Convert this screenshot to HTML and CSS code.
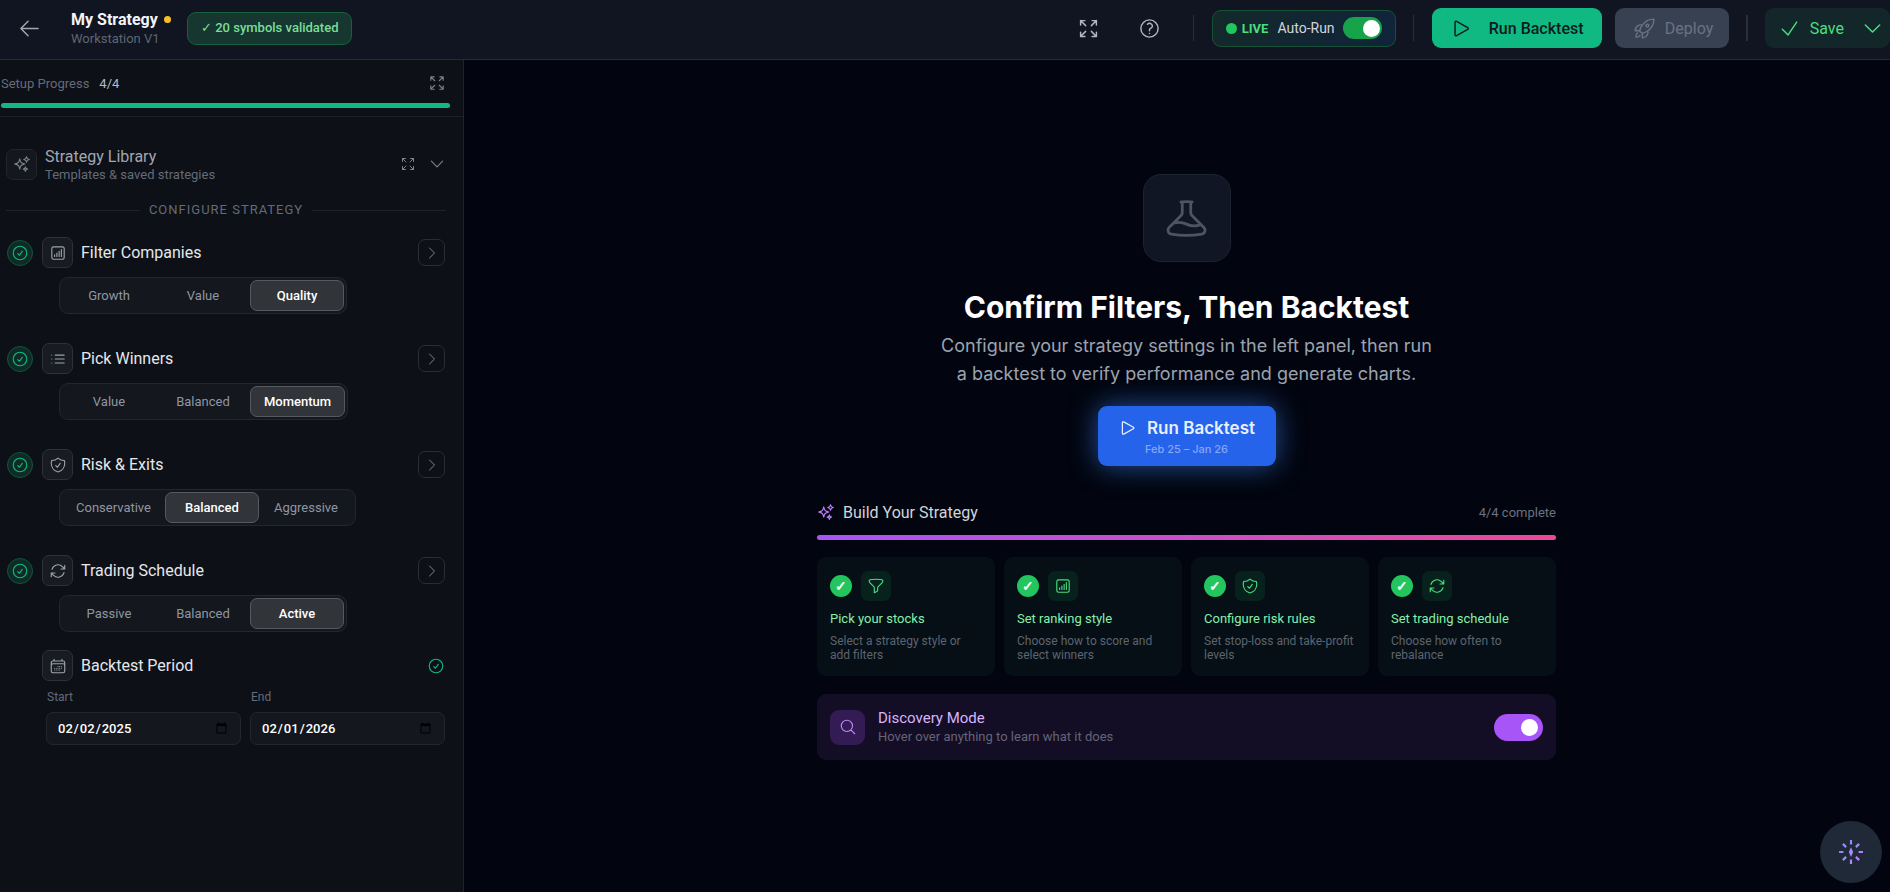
FILE: index.html
```html
<!DOCTYPE html>
<html lang="en">
<head>
  <meta charset="UTF-8">
  <meta name="viewport" content="width=device-width, initial-scale=1.0">
  <title>My Strategy - Workstation V1</title>
  <link rel="stylesheet" href="styles.css">
</head>
<body>
  <!-- Icon set -->
  <svg class="icon-defs" aria-hidden="true">
    <symbol id="i-arrow-left" viewBox="0 0 24 24"><path d="M10.5 19.5 3 12m0 0 7.5-7.5M3 12h18"/></symbol>
    <symbol id="i-expand" viewBox="0 0 24 24"><path d="M3.75 3.75v4.5m0-4.5h4.5m-4.5 0L9 9M3.75 20.25v-4.5m0 4.5h4.5m-4.5 0L9 15M20.25 3.75h-4.5m4.5 0v4.5m0-4.5L15 9m5.25 11.25h-4.5m4.5 0v-4.5m0 4.5L15 15"/></symbol>
    <symbol id="i-help" viewBox="0 0 24 24"><path d="M9.879 7.519c1.171-1.025 3.071-1.025 4.242 0 1.172 1.025 1.172 2.687 0 3.712-.203.179-.43.326-.67.442-.745.361-1.45.999-1.45 1.827v.75M21 12a9 9 0 1 1-18 0 9 9 0 0 1 18 0Zm-9 5.25h.008v.008H12v-.008Z"/></symbol>
    <symbol id="i-play" viewBox="0 0 24 24"><path d="M5.25 5.653c0-.856.917-1.398 1.667-.986l11.54 6.347a1.125 1.125 0 0 1 0 1.972l-11.54 6.347a1.125 1.125 0 0 1-1.667-.986V5.653Z"/></symbol>
    <symbol id="i-rocket" viewBox="0 0 24 24"><path d="M15.59 14.37a6 6 0 0 1-5.84 7.38v-4.8m5.84-2.58a14.98 14.98 0 0 0 6.16-12.12A14.98 14.98 0 0 0 9.631 8.41m5.96 5.96a14.926 14.926 0 0 1-5.841 2.58m-.119-8.54a6 6 0 0 0-7.381 5.84h4.8m2.581-5.84a14.927 14.927 0 0 0-2.58 5.84m2.699 2.7c-.103.021-.207.041-.311.06a15.09 15.09 0 0 1-2.448-2.448 14.9 14.9 0 0 1 .06-.312m-2.24 2.39a4.493 4.493 0 0 0-1.757 4.306 4.493 4.493 0 0 0 4.306-1.758M16.5 9a1.5 1.5 0 1 1-3 0 1.5 1.5 0 0 1 3 0Z"/></symbol>
    <symbol id="i-check" viewBox="0 0 24 24"><path d="m4.5 12.75 6 6 9-13.5"/></symbol>
    <symbol id="i-chevron-down" viewBox="0 0 24 24"><path d="m19.5 8.25-7.5 7.5-7.5-7.5"/></symbol>
    <symbol id="i-chevron-right" viewBox="0 0 24 24"><path d="m8.25 4.5 7.5 7.5-7.5 7.5"/></symbol>
    <symbol id="i-sparkles" viewBox="0 0 24 24"><path d="M9.813 15.904 9 18.75l-.813-2.846a4.5 4.5 0 0 0-3.09-3.09L2.25 12l2.846-.813a4.5 4.5 0 0 0 3.09-3.09L9 5.25l.813 2.846a4.5 4.5 0 0 0 3.09 3.09L15.75 12l-2.846.813a4.5 4.5 0 0 0-3.09 3.09ZM18.259 8.715 18 9.75l-.259-1.035a3.375 3.375 0 0 0-2.455-2.456L14.25 6l1.036-.259a3.375 3.375 0 0 0 2.455-2.456L18 2.25l.259 1.035a3.375 3.375 0 0 0 2.456 2.456L21.75 6l-1.035.259a3.375 3.375 0 0 0-2.456 2.456ZM16.894 20.567 16.5 21.75l-.394-1.183a2.25 2.25 0 0 0-1.423-1.423L13.5 18.75l1.183-.394a2.25 2.25 0 0 0 1.423-1.423l.394-1.183.394 1.183a2.25 2.25 0 0 0 1.423 1.423l1.183.394-1.183.394a2.25 2.25 0 0 0-1.423 1.423Z"/></symbol>
    <symbol id="i-check-circle" viewBox="0 0 24 24"><path d="M9 12.75 11.25 15 15 9.75M21 12a9 9 0 1 1-18 0 9 9 0 0 1 18 0Z"/></symbol>
    <symbol id="i-chart" viewBox="0 0 24 24"><path d="M7.5 14.25v2.25m3-4.5v4.5m3-6.75v6.75m3-9v9M6 20.25h12A2.25 2.25 0 0 0 20.25 18V6A2.25 2.25 0 0 0 18 3.75H6A2.25 2.25 0 0 0 3.75 6v12A2.25 2.25 0 0 0 6 20.25Z"/></symbol>
    <symbol id="i-list" viewBox="0 0 24 24"><path d="M8.25 6.75h12M8.25 12h12m-12 5.25h12M3.75 6.75h.007v.008H3.75V6.75Zm0 5.25h.007v.008H3.75V12Zm0 5.25h.007v.008H3.75v-.008Z"/></symbol>
    <symbol id="i-shield" viewBox="0 0 24 24"><path d="M9 12.75 11.25 15 15 9.75m-3-7.036A11.959 11.959 0 0 1 3.598 6 11.99 11.99 0 0 0 3 9.749c0 5.592 3.824 10.29 9 11.623 5.176-1.332 9-6.03 9-11.622 0-1.31-.21-2.571-.598-3.751h-.152c-3.196 0-6.1-1.248-8.25-3.285Z"/></symbol>
    <symbol id="i-refresh" viewBox="0 0 24 24"><path d="M16.023 9.348h4.992v-.001M2.985 19.644v-4.992m0 0h4.992m-4.993 0 3.181 3.183a8.25 8.25 0 0 0 13.803-3.7M4.031 9.865a8.25 8.25 0 0 1 13.803-3.7l3.181 3.182m0-4.991v4.99"/></symbol>
    <symbol id="i-calendar" viewBox="0 0 24 24"><path d="M6.75 3v2.25M17.25 3v2.25M3 18.75V7.5a2.25 2.25 0 0 1 2.25-2.25h13.5A2.25 2.25 0 0 1 21 7.5v11.25m-18 0A2.25 2.25 0 0 0 5.25 21h13.5A2.25 2.25 0 0 0 21 18.75m-18 0v-7.5A2.25 2.25 0 0 1 5.25 9h13.5A2.25 2.25 0 0 1 21 11.25v7.5m-9-6h.008v.008H12v-.008ZM12 15h.008v.008H12V15Zm0 2.25h.008v.008H12v-.008ZM9.75 15h.008v.008H9.75V15Zm0 2.25h.008v.008H9.75v-.008ZM7.5 15h.008v.008H7.5V15Zm0 2.25h.008v.008H7.5v-.008Zm6.75-4.5h.008v.008h-.008v-.008Zm0 2.25h.008v.008h-.008V15Zm0 2.25h.008v.008h-.008v-.008Zm2.25-4.5h.008v.008H16.5v-.008Zm0 2.25h.008v.008H16.5V15Z"/></symbol>
    <symbol id="i-funnel" viewBox="0 0 24 24"><path d="M12 3c2.755 0 5.455.232 8.083.678.533.09.917.556.917 1.096v1.044a2.25 2.25 0 0 1-.659 1.591l-5.432 5.432a2.25 2.25 0 0 0-.659 1.591v2.927a2.25 2.25 0 0 1-1.244 2.013L9.75 21v-6.568a2.25 2.25 0 0 0-.659-1.591L3.659 7.409A2.25 2.25 0 0 1 3 5.818V4.774c0-.54.384-1.006.917-1.096A48.32 48.32 0 0 1 12 3Z"/></symbol>
    <symbol id="i-search" viewBox="0 0 24 24"><path d="m21 21-5.197-5.197m0 0A7.5 7.5 0 1 0 5.196 5.196a7.5 7.5 0 0 0 10.607 10.607Z"/></symbol>
    <symbol id="i-beaker" viewBox="0 0 24 24"><path d="M9.75 3.104v5.714a2.25 2.25 0 0 1-.659 1.591L5 14.5M9.75 3.104c-.251.023-.501.05-.75.082m.75-.082a24.301 24.301 0 0 1 4.5 0m0 0v5.714c0 .597.237 1.17.659 1.591L19.8 15.3M14.25 3.104c.251.023.501.05.75.082M19.8 15.3l-1.57.393A9.065 9.065 0 0 1 12 15a9.065 9.065 0 0 0-6.23-.693L5 14.5m14.8.8 1.402 1.402c1.232 1.232.65 3.318-1.067 3.611A48.309 48.309 0 0 1 12 21c-2.773 0-5.491-.235-8.135-.687-1.718-.293-2.3-2.379-1.067-3.61L5 14.5"/></symbol>
  </svg>

  <!-- Top Bar -->
  <header class="topbar">
    <button class="icon-button back" aria-label="Back"><svg class="icon icon-lg"><use href="#i-arrow-left"/></svg></button>
    <div class="title-block">
      <h1 class="strategy-name">My Strategy <span class="unsaved-dot"></span></h1>
      <div class="strategy-sub">Workstation V1</div>
    </div>
    <div class="validated">✓ 20 symbols validated</div>

    <div class="actions">
      <button class="icon-button" aria-label="Full screen"><svg class="icon icon-lg"><use href="#i-expand"/></svg></button>
      <button class="icon-button" aria-label="Help"><svg class="icon icon-lg"><use href="#i-help"/></svg></button>
      <span class="divider"></span>
      <div class="live">
        <span class="live-dot"></span>
        <span class="live-label">LIVE</span>
        <label class="live-text" for="auto-run">Auto-Run</label>
        <input class="toggle toggle-green" type="checkbox" id="auto-run" checked>
      </div>
      <span class="divider"></span>
      <button class="button run"><svg class="icon icon-lg"><use href="#i-play"/></svg>Run Backtest</button>
      <button class="button deploy" disabled><svg class="icon icon-lg"><use href="#i-rocket"/></svg>Deploy</button>
      <span class="divider divider-thick"></span>
      <div class="save-group">
        <button class="button save"><svg class="icon icon-lg"><use href="#i-check"/></svg>Save</button>
        <button class="button save-menu" aria-label="Save options"><svg class="icon icon-lg"><use href="#i-chevron-down"/></svg></button>
      </div>
    </div>
  </header>

  <div class="workspace">
    <!-- Left Panel -->
    <aside class="sidebar">
      <div class="progress-head">
        <div class="progress-row">
          <span class="muted">Setup Progress</span>
          <span class="progress-count">4/4</span>
          <button class="icon-button push" aria-label="Expand panel"><svg class="icon"><use href="#i-expand"/></svg></button>
        </div>
        <div class="bar bar-green"></div>
      </div>

      <div class="panel">
        <div class="library">
          <span class="tile tile-dim"><svg class="icon"><use href="#i-sparkles"/></svg></span>
          <div class="library-text">
            <div class="library-title">Strategy Library</div>
            <div class="library-sub">Templates &amp; saved strategies</div>
          </div>
          <button class="icon-button push" aria-label="Expand library"><svg class="icon icon-sm"><use href="#i-expand"/></svg></button>
          <button class="icon-button" aria-label="Show library"><svg class="icon"><use href="#i-chevron-down"/></svg></button>
        </div>

        <div class="separator">CONFIGURE STRATEGY</div>

        <section class="step">
          <div class="step-head">
            <span class="status"><svg class="icon"><use href="#i-check-circle"/></svg></span>
            <span class="tile"><svg class="icon"><use href="#i-chart"/></svg></span>
            <h2 class="step-title">Filter Companies</h2>
            <button class="open" aria-label="Open Filter Companies"><svg class="icon icon-sm"><use href="#i-chevron-right"/></svg></button>
          </div>
          <div class="segments">
            <button class="segment">Growth</button>
            <button class="segment">Value</button>
            <button class="segment active">Quality</button>
          </div>
        </section>

        <section class="step">
          <div class="step-head">
            <span class="status"><svg class="icon"><use href="#i-check-circle"/></svg></span>
            <span class="tile"><svg class="icon"><use href="#i-list"/></svg></span>
            <h2 class="step-title">Pick Winners</h2>
            <button class="open" aria-label="Open Pick Winners"><svg class="icon icon-sm"><use href="#i-chevron-right"/></svg></button>
          </div>
          <div class="segments">
            <button class="segment">Value</button>
            <button class="segment">Balanced</button>
            <button class="segment active">Momentum</button>
          </div>
        </section>

        <section class="step">
          <div class="step-head">
            <span class="status"><svg class="icon"><use href="#i-check-circle"/></svg></span>
            <span class="tile"><svg class="icon"><use href="#i-shield"/></svg></span>
            <h2 class="step-title">Risk &amp; Exits</h2>
            <button class="open" aria-label="Open Risk and Exits"><svg class="icon icon-sm"><use href="#i-chevron-right"/></svg></button>
          </div>
          <div class="segments">
            <button class="segment">Conservative</button>
            <button class="segment active">Balanced</button>
            <button class="segment">Aggressive</button>
          </div>
        </section>

        <section class="step">
          <div class="step-head">
            <span class="status"><svg class="icon"><use href="#i-check-circle"/></svg></span>
            <span class="tile"><svg class="icon"><use href="#i-refresh"/></svg></span>
            <h2 class="step-title">Trading Schedule</h2>
            <button class="open" aria-label="Open Trading Schedule"><svg class="icon icon-sm"><use href="#i-chevron-right"/></svg></button>
          </div>
          <div class="segments">
            <button class="segment">Passive</button>
            <button class="segment">Balanced</button>
            <button class="segment active">Active</button>
          </div>
        </section>

        <section class="period">
          <div class="step-head">
            <span class="tile"><svg class="icon"><use href="#i-calendar"/></svg></span>
            <h2 class="step-title">Backtest Period</h2>
            <svg class="icon period-check"><use href="#i-check-circle"/></svg>
          </div>
          <div class="dates">
            <div class="date-field">
              <label for="start">Start</label>
              <input type="date" id="start" value="2025-02-02">
            </div>
            <div class="date-field">
              <label for="end">End</label>
              <input type="date" id="end" value="2026-02-01">
            </div>
          </div>
        </section>
      </div>
    </aside>

    <!-- Main Area -->
    <main class="main">
      <div class="hero-icon"><svg class="icon icon-xl"><use href="#i-beaker"/></svg></div>
      <h2 class="hero-title">Confirm Filters, Then Backtest</h2>
      <p class="hero-text">Configure your strategy settings in the left panel, then run a backtest to verify performance and generate charts.</p>
      <button class="hero-run">
        <span class="hero-run-label"><svg class="icon icon-md"><use href="#i-play"/></svg>Run Backtest</span>
        <span class="hero-run-dates">Feb 25 – Jan 26</span>
      </button>

      <div class="build">
        <div class="build-head">
          <svg class="icon build-icon"><use href="#i-sparkles"/></svg>
          <h3 class="build-title">Build Your Strategy</h3>
          <span class="build-count">4/4 complete</span>
        </div>
        <div class="bar bar-purple"></div>

        <div class="cards">
          <div class="card">
            <div class="card-icons"><span class="done">✓</span><span class="card-tile"><svg class="icon"><use href="#i-funnel"/></svg></span></div>
            <div class="card-title">Pick your stocks</div>
            <div class="card-text">Select a strategy style or add filters</div>
          </div>
          <div class="card">
            <div class="card-icons"><span class="done">✓</span><span class="card-tile"><svg class="icon"><use href="#i-chart"/></svg></span></div>
            <div class="card-title">Set ranking style</div>
            <div class="card-text">Choose how to score and select winners</div>
          </div>
          <div class="card">
            <div class="card-icons"><span class="done">✓</span><span class="card-tile"><svg class="icon"><use href="#i-shield"/></svg></span></div>
            <div class="card-title">Configure risk rules</div>
            <div class="card-text">Set stop-loss and take-profit levels</div>
          </div>
          <div class="card">
            <div class="card-icons"><span class="done">✓</span><span class="card-tile"><svg class="icon"><use href="#i-refresh"/></svg></span></div>
            <div class="card-title">Set trading schedule</div>
            <div class="card-text">Choose how often to rebalance</div>
          </div>
        </div>

        <div class="discovery">
          <span class="discovery-icon"><svg class="icon"><use href="#i-search"/></svg></span>
          <div>
            <label class="discovery-title" for="discovery">Discovery Mode</label>
            <div class="discovery-text">Hover over anything to learn what it does</div>
          </div>
          <input class="toggle toggle-purple" type="checkbox" id="discovery" checked>
        </div>
      </div>
    </main>
  </div>

  <!-- Floating Assistant Button -->
  <button class="fab" aria-label="Assistant">
    <svg class="fab-icon" viewBox="0 0 24 24">
      <defs>
        <linearGradient id="fab-gradient" gradientUnits="userSpaceOnUse" x1="0" y1="0" x2="24" y2="24">
          <stop offset="0" stop-color="#818cf8"/>
          <stop offset="1" stop-color="#c084fc"/>
        </linearGradient>
      </defs>
      <path d="M12 1v4M12 19v4M1 12h4M19 12h4M4.500 4.500l3 3M16.500 16.500l3 3M4.500 19.500l3-3M16.500 7.500l3-3" fill="none" stroke="url(#fab-gradient)" stroke-width="2"/>
      <path d="M12 7.500 14 12l-2 4.500L10 12Z" fill="#a78bfa"/>
    </svg>
  </button>
</body>
</html>
```

FILE: styles.css
```css
/* General Styling */
* {
  box-sizing: border-box;
}

body {
  margin: 0;
  min-height: 100vh;
  display: flex;
  flex-direction: column;
  font-family: Roboto, "Liberation Sans", sans-serif;
  font-size: 13px;
  background: #02050f;
  color: #e5e7eb;
}

h1, h2, h3, p {
  margin: 0;
  font-weight: normal;
}

button {
  font-family: inherit;
  cursor: pointer;
}

/* Icons */
.icon-defs {
  position: absolute;
  width: 0;
  height: 0;
}

.icon {
  width: 18px;
  height: 18px;
  flex-shrink: 0;
  fill: none;
  stroke: currentColor;
  stroke-width: 1.5;
  stroke-linecap: round;
  stroke-linejoin: round;
}

.icon-sm { width: 16px; height: 16px; }
.icon-md { width: 20px; height: 20px; }
.icon-lg { width: 23px; height: 23px; }
.icon-xl { width: 45px; height: 45px; }

.icon-button {
  display: flex;
  padding: 0;
  border: none;
  background: none;
  color: #7c818c;
}

.push {
  margin-left: auto;
}

/* Top Bar */
.topbar {
  display: flex;
  align-items: center;
  height: 60px;
  padding-left: 18px;
  padding-bottom: 3px;
  background: #101521;
  border-bottom: 1px solid #252a37;
}

.back {
  margin-right: 30px;
  color: #a3a6ad;
}

.title-block {
  width: 116px;
  padding-top: 1px;
}

.strategy-name {
  display: flex;
  align-items: center;
  gap: 6px;
  font-size: 16px;
  line-height: 20px;
  font-weight: bold;
  color: #f3f4f6;
  white-space: nowrap;
}

.unsaved-dot {
  width: 7px;
  height: 7px;
  border-radius: 50%;
  background: #fbbf24;
}

.strategy-sub {
  line-height: 18px;
  color: #5f6571;
}

.validated {
  height: 33px;
  padding: 0 13px;
  border: 1px solid #176039;
  border-radius: 9px;
  background: #15372f;
  color: #7bdd9b;
  font-weight: 500;
  line-height: 30px;
  white-space: nowrap;
}

.actions {
  display: flex;
  align-items: center;
  margin-left: auto;
}

.actions .icon-button {
  margin-right: 38px;
  color: #b4b7bf;
}

.actions .icon-button + .divider {
  margin-left: -6px;
}

.divider {
  width: 1px;
  height: 26px;
  margin-right: 18px;
  background: #292e3a;
}

.divider-thick {
  width: 2px;
  margin: 0 17px;
}

.live {
  display: flex;
  align-items: center;
  height: 37px;
  width: 184px;
  margin-right: 17px;
  padding: 0 13px;
  border: 1px solid #175236;
  border-radius: 9px;
  background: linear-gradient(90deg, #13292a, #10243a);
}

.live-dot {
  width: 11px;
  height: 11px;
  margin-right: 5px;
  border-radius: 50%;
  background: #22c55e;
}

.live-label {
  margin-right: 9px;
  font-size: 13px;
  font-weight: bold;
  color: #4ade80;
}

.live-text {
  font-size: 14px;
  color: #d1d5db;
}

/* Toggle Switches */
.toggle {
  appearance: none;
  display: flex;
  justify-content: flex-end;
  align-items: center;
  flex-shrink: 0;
  margin: 0 0 0 auto;
  border-radius: 14px;
  cursor: pointer;
}

.toggle::before {
  content: "";
  width: 17px;
  height: 17px;
  border-radius: 50%;
  background: #fff;
}

.toggle-green {
  width: 39px;
  height: 22px;
  padding-right: 2px;
  background: #16a34a;
}

.toggle-purple {
  width: 49px;
  height: 27px;
  padding-right: 5px;
  background: #a855f7;
}

/* Top Bar Buttons */
.button {
  display: flex;
  align-items: center;
  height: 40px;
  padding: 0 18px;
  border: none;
  border-radius: 9px;
  font-size: 16px;
  white-space: nowrap;
}

.run {
  gap: 16px;
  width: 170px;
  margin-right: 13px;
  background: #10b981;
  color: #0b1a20;
  font-weight: 500;
}

.deploy {
  gap: 9px;
  width: 114px;
  background: #374151;
  color: #6b7280;
  cursor: default;
}

.save-group {
  display: flex;
  border-radius: 9px;
  background: #13262a;
}

.save,
.save-menu {
  background: none;
  color: #4ade80;
}

.save {
  gap: 9px;
  padding: 0 9px 0 13px;
}

.save-menu {
  padding: 0 6px 0 8px;
}

/* Workspace */
.workspace {
  display: flex;
  flex: 1;
}

.sidebar {
  width: 464px;
  flex-shrink: 0;
  background: #0d1016;
  border-right: 1px solid #20232a;
}

.muted {
  color: #646b78;
}

.progress-head {
  height: 57px;
  padding: 14px 13px 0 1px;
  border-bottom: 1px solid #1d2027;
}

.progress-row {
  display: flex;
  align-items: center;
  gap: 10px;
  height: 18px;
  padding-right: 4px;
  margin-bottom: 11px;
}

.progress-count {
  color: #b6bbc4;
}

.bar {
  height: 5px;
  border-radius: 3px;
}

.bar-green {
  background: #10b981;
}

.bar-purple {
  background: linear-gradient(90deg, #a855f7, #ec4899);
}

.panel {
  padding: 29px 17px 0 6px;
}

/* Strategy Library */
.library {
  display: flex;
  align-items: center;
  height: 36px;
}

.library .icon-button + .icon-button {
  margin-left: 12px;
}

.library-text {
  margin-left: 8px;
  padding-top: 2px;
}

.library-title {
  font-size: 16px;
  line-height: 19px;
  color: #a0a7b3;
}

.library-sub {
  line-height: 18px;
  color: #646b78;
}

.tile {
  display: flex;
  align-items: center;
  justify-content: center;
  width: 31px;
  height: 31px;
  flex-shrink: 0;
  border: 1px solid #2e3138;
  border-radius: 7px;
  background: #181b21;
  color: #9ca3af;
}

.tile-dim {
  border-color: #22252c;
  background: #14171d;
  color: #7d838f;
}

.separator {
  display: flex;
  align-items: center;
  gap: 9px;
  margin: 19px 0 18px;
  line-height: 18px;
  letter-spacing: 1px;
  color: #646b78;
  white-space: nowrap;
}

.separator::before,
.separator::after {
  content: "";
  flex: 1;
  height: 1px;
  background: #1f2229;
}

/* Steps */
.step {
  height: 106px;
}

.step-head {
  display: flex;
  align-items: center;
}

.status {
  display: flex;
  align-items: center;
  justify-content: center;
  width: 26px;
  height: 26px;
  margin: 0 9px 0 1px;
  border: 1px solid #12543f;
  border-radius: 50%;
  background: #0e2b25;
  color: #10b981;
}

.step-title {
  margin-left: 8px;
  font-size: 16px;
  line-height: 20px;
  color: #e5e7eb;
}

.open {
  display: flex;
  align-items: center;
  justify-content: center;
  width: 27px;
  height: 27px;
  margin-left: auto;
  margin-right: 1px;
  padding: 0;
  border: 1px solid #2a2d34;
  border-radius: 7px;
  background: none;
  color: #7d838f;
}

.segments {
  display: inline-flex;
  height: 37px;
  margin: 9px 0 0 53px;
  padding: 2px;
  border: 1px solid #23262d;
  border-radius: 9px;
  background: #14171d;
}

.segment {
  min-width: 94px;
  padding: 0 13px;
  border: 1px solid transparent;
  border-radius: 7px;
  background: none;
  color: #8f96a3;
  font-size: 13px;
}

.active {
  border-color: #56595e;
  background: #313439;
  color: #fff;
  font-weight: 500;
}

/* Backtest Period */
.period {
  padding-left: 36px;
  margin-top: -11px;
}

.period-check {
  margin-left: auto;
  margin-right: 1px;
  color: #10b981;
}

.dates {
  display: flex;
  gap: 9px;
  margin: 8px 1px 0 4px;
}

.date-field {
  flex: 1;
}

.date-field label {
  display: block;
  margin: 0 1px 6px;
  font-size: 12px;
  line-height: 17px;
  color: #646b78;
}

.date-field input {
  display: block;
  width: 100%;
  height: 33px;
  padding: 0 10px;
  border: 1px solid #23262d;
  border-radius: 7px;
  background: #14171d;
  color: #fff;
  font-family: inherit;
  font-size: 13px;
  font-weight: 500;
}

/* Main Area */
.main {
  display: flex;
  flex-direction: column;
  align-items: center;
  flex: 1;
  padding: 114px 0 40px 19px;
}

.hero-icon {
  display: flex;
  align-items: center;
  justify-content: center;
  width: 88px;
  height: 88px;
  border: 1px solid #1c2431;
  border-radius: 18px;
  background: #101623;
  color: #4b5563;
}

.hero-title {
  margin-top: 25px;
  font-family: Inter, sans-serif;
  font-size: 30px;
  line-height: 40px;
  font-weight: bold;
  color: #fff;
}

.hero-text {
  max-width: 504px;
  margin-top: 5px;
  font-family: Inter, sans-serif;
  font-size: 18px;
  line-height: 28px;
  text-align: center;
  color: #9ca3af;
}

.hero-run {
  width: 178px;
  height: 60px;
  margin-top: 18px;
  padding: 2px 0 0;
  border: none;
  border-radius: 9px;
  background: #2563eb;
  box-shadow: 0 0 28px rgba(59, 130, 246, 0.6);
  font-family: Inter, sans-serif;
  color: #e8effd;
}

.hero-run-label {
  display: flex;
  align-items: center;
  justify-content: center;
  gap: 9px;
  font-size: 17px;
  line-height: 24px;
  font-weight: 600;
}

.hero-run-dates {
  display: block;
  font-size: 11px;
  line-height: 18px;
  font-weight: 500;
  color: #85a7f5;
}

/* Build Your Strategy */
.build {
  width: 739px;
  max-width: 100%;
  margin-top: 36px;
}

.build-head {
  display: flex;
  align-items: center;
  gap: 8px;
  height: 20px;
  margin-bottom: 13px;
}

.build-icon {
  color: #c084fc;
}

.build-title {
  font-size: 16px;
  color: #d1d5db;
}

.build-count {
  margin-left: auto;
  color: #6b7280;
}

.cards {
  display: grid;
  grid-template-columns: repeat(4, 1fr);
  gap: 9px;
  margin: 17px 0 18px;
}

.card {
  height: 119px;
  padding: 14px 13px 0;
  border-radius: 9px;
  background: #050f15;
}

.card-icons {
  display: flex;
  align-items: center;
  gap: 9px;
}

.done {
  width: 22px;
  height: 22px;
  border-radius: 50%;
  background: #22c55e;
  color: #fff;
  font-size: 14px;
  font-weight: bold;
  line-height: 22px;
  text-align: center;
}

.card-tile {
  display: flex;
  align-items: center;
  justify-content: center;
  width: 30px;
  height: 30px;
  border-radius: 7px;
  background: #07211d;
  color: #4ade80;
}

.card-title {
  margin-top: 9px;
  line-height: 18px;
  color: #86efac;
}

.card-text {
  margin-top: 6px;
  font-size: 12px;
  line-height: 14px;
  color: #5d6471;
}

/* Discovery Mode */
.discovery {
  display: flex;
  align-items: center;
  gap: 13px;
  height: 66px;
  padding: 0 13px;
  border-radius: 9px;
  background: #130e25;
}

.discovery-icon {
  display: flex;
  align-items: center;
  justify-content: center;
  width: 35px;
  height: 35px;
  border-radius: 9px;
  background: #331c54;
  color: #c084fc;
}

.discovery-title {
  display: block;
  font-size: 15px;
  line-height: 20px;
  color: #d8b4fe;
}

.discovery-text {
  line-height: 18px;
  color: #646477;
}

/* Floating Assistant Button */
.fab {
  position: fixed;
  right: 8px;
  bottom: 9px;
  display: flex;
  align-items: center;
  justify-content: center;
  width: 62px;
  height: 62px;
  padding: 0;
  border: none;
  border-radius: 50%;
  background: #1f2937;
}

.fab-icon {
  width: 26px;
  height: 26px;
}
```
